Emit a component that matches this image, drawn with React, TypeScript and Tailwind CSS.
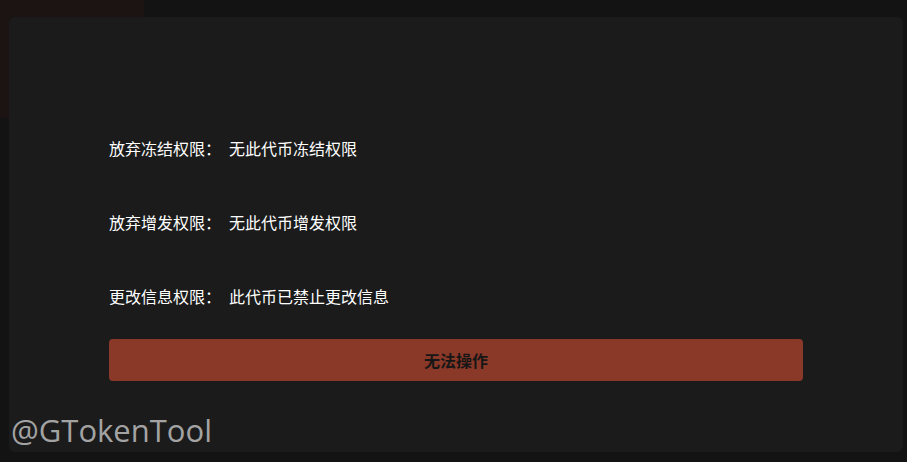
import React from 'react';

const rows = [
  { label: '放弃冻结权限：', value: '无此代币冻结权限' },
  { label: '放弃增发权限：', value: '无此代币增发权限' },
  { label: '更改信息权限：', value: '此代币已禁止更改信息' },
];

export default function App() {
  return (
    <div
      className="relative w-[907px] h-[462px] overflow-hidden bg-[#131313]"
      style={{ fontFamily: '"Noto Sans CJK SC", "Noto Sans", sans-serif' }}
    >
      {/* dimmed backdrop fragment */}
      <div className="absolute left-0 top-0 w-[144px] h-[118px] bg-[#1b1413]" />

      <div className="relative ml-[9px] mt-[17px] w-[894px] h-[435px] rounded-[6px] bg-[#1b1b1b] px-[100px] pt-[120px]">
        <div className="flex flex-col gap-[52px]">
          {rows.map((r) => (
            <div key={r.label} className="flex items-center h-[22px] text-[16px] text-white">
              <span className="w-[120px] shrink-0">{r.label}</span>
              <span>{r.value}</span>
            </div>
          ))}
        </div>
        <button className="mt-[32px] w-full h-[42px] rounded-[4px] bg-[#8a3828] text-[16px] font-bold text-[#161616]">
          无法操作
        </button>
      </div>

      <div
        className="absolute left-[11px] top-[410px] text-[31px] leading-[40px] text-[#a3a3a3]"
        style={{ fontFamily: '"Open Sans", "Noto Sans", sans-serif' }}
      >
        @GTokenTool
      </div>
    </div>
  );
}
